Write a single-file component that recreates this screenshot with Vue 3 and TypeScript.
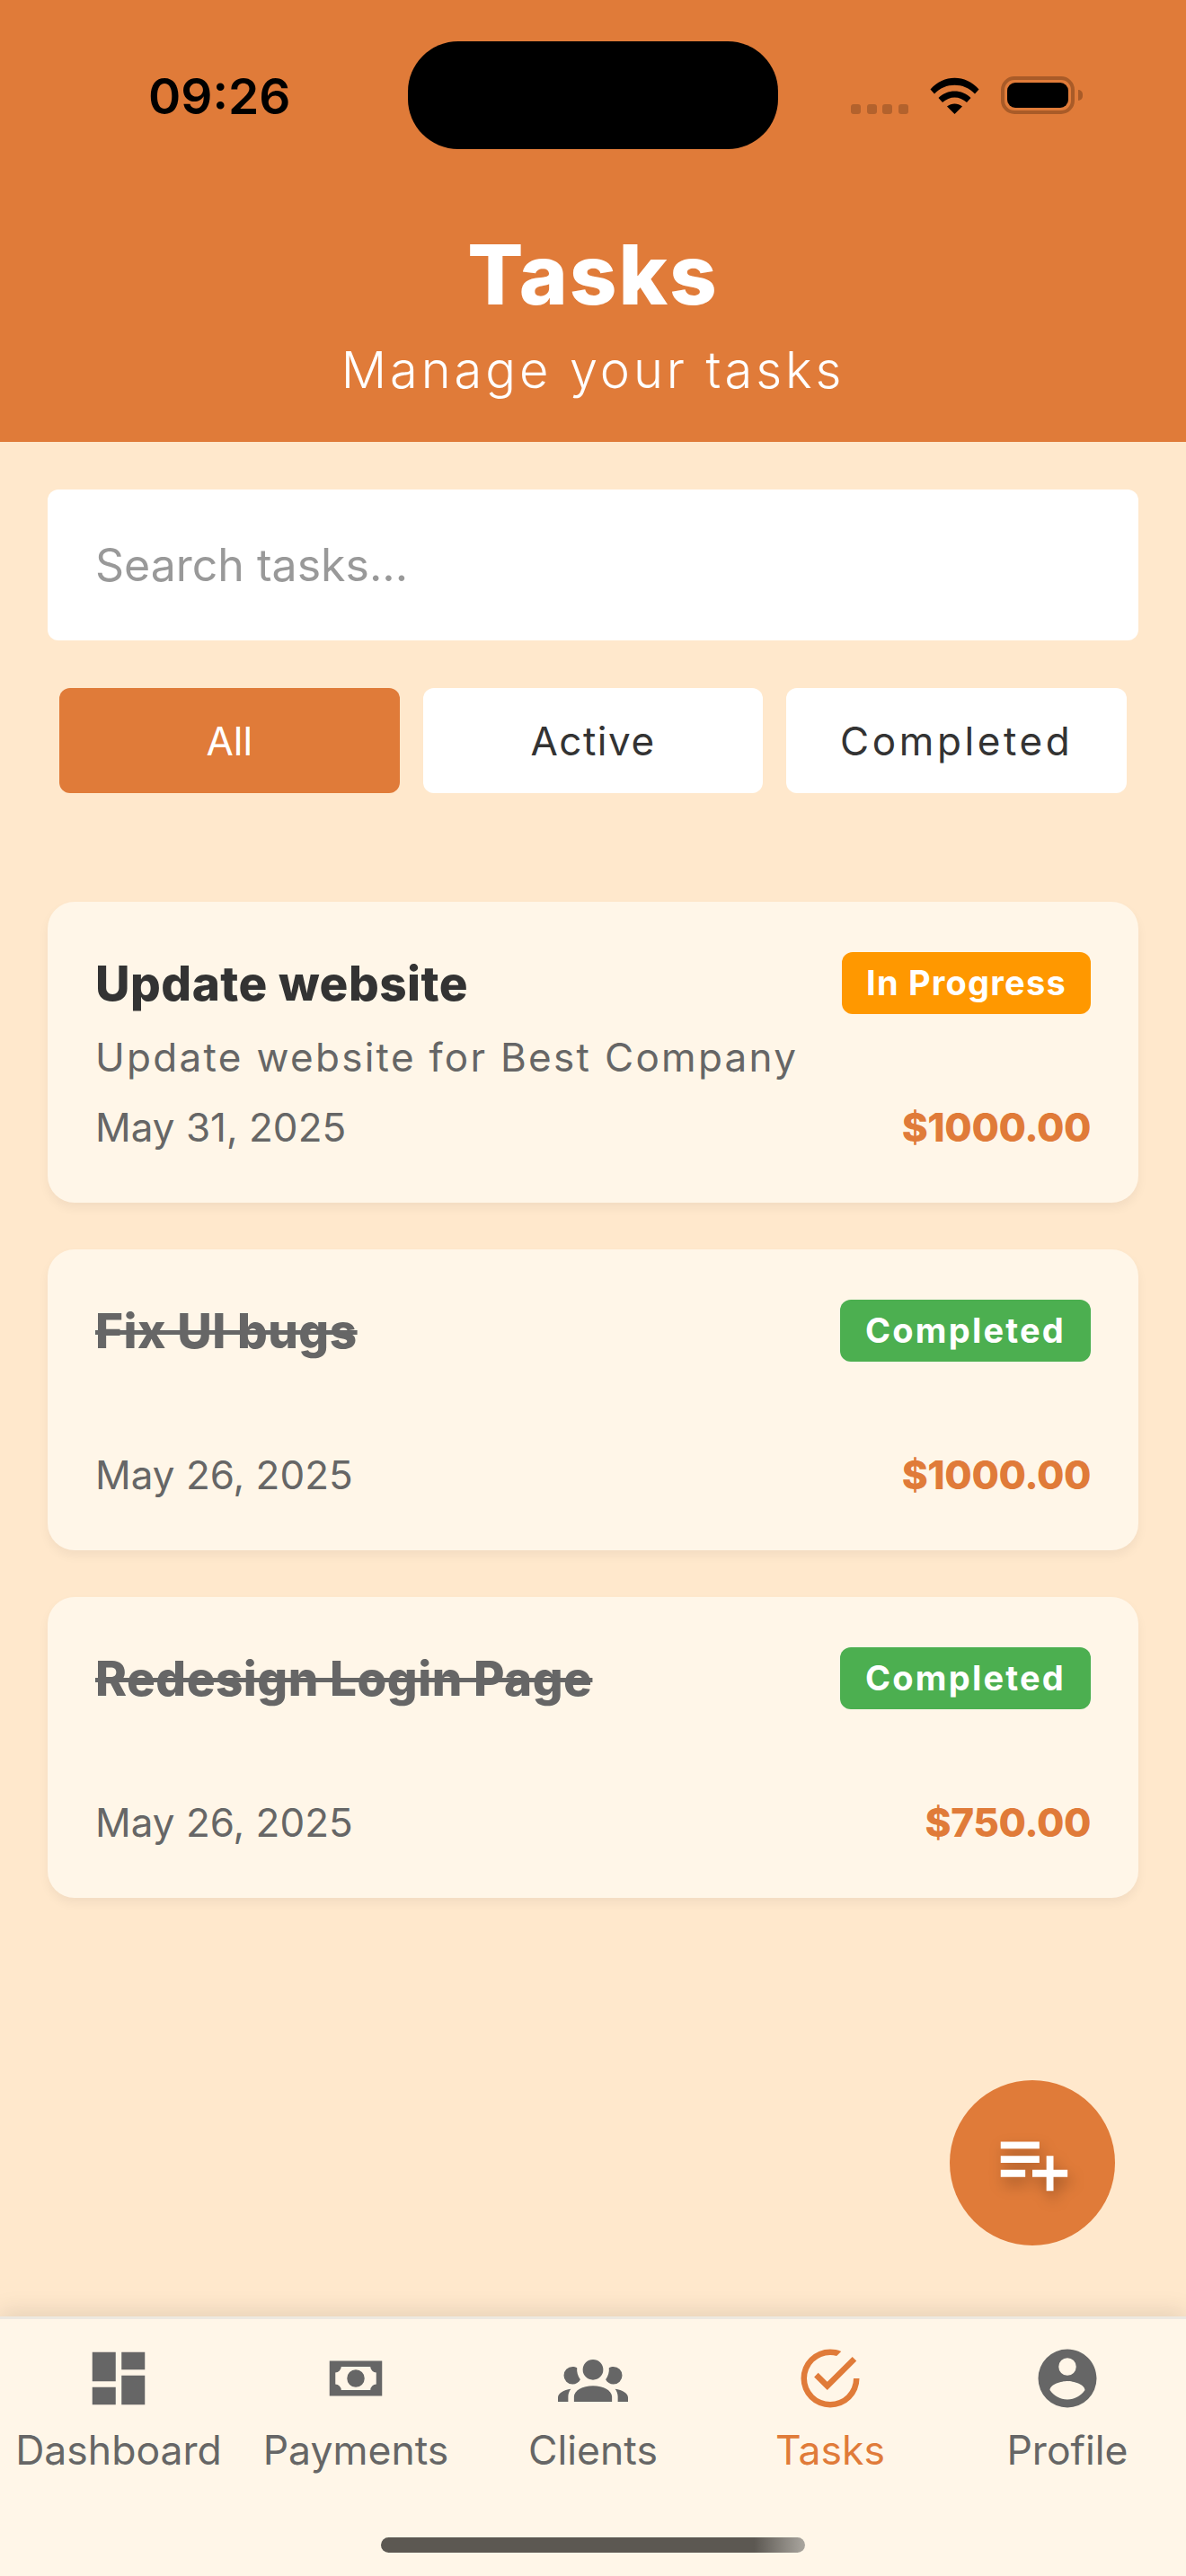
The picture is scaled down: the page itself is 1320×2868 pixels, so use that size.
<script setup lang="ts">
type Status = 'In Progress' | 'Completed'
interface Task { title: string; desc: string; date: string; price: string; status: Status }

const filters = ['All', 'Active', 'Completed']
const tasks: Task[] = [
  { title: 'Update website', desc: 'Update website for Best Company', date: 'May 31, 2025', price: '$1000.00', status: 'In Progress' },
  { title: 'Fix UI bugs', desc: '', date: 'May 26, 2025', price: '$1000.00', status: 'Completed' },
  { title: 'Redesign Login Page', desc: '', date: 'May 26, 2025', price: '$750.00', status: 'Completed' },
]
const tabs = [
  { label: 'Dashboard', active: false, d: 'M13,3V9H21V3M13,21H21V11H13M3,21H11V15H3M3,13H11V3H3V13Z' },
  { label: 'Payments', active: false, d: 'M3,6H21V18H3V6M12,9A3,3 0 0,1 15,12A3,3 0 0,1 12,15A3,3 0 0,1 9,12A3,3 0 0,1 12,9M7,8A2,2 0 0,1 5,10V14A2,2 0 0,1 7,16H17A2,2 0 0,1 19,14V10A2,2 0 0,1 17,8H7Z' },
  { label: 'Clients', active: false, d: 'M12,5.5A3.5,3.5 0 0,1 15.5,9A3.5,3.5 0 0,1 12,12.5A3.5,3.5 0 0,1 8.5,9A3.5,3.5 0 0,1 12,5.5M5,8C5.56,8 6.08,8.15 6.53,8.42C6.38,9.85 6.8,11.27 7.66,12.38C7.16,13.34 6.16,14 5,14A3,3 0 0,1 2,11A3,3 0 0,1 5,8M19,8A3,3 0 0,1 22,11A3,3 0 0,1 19,14C17.84,14 16.84,13.34 16.34,12.38C17.2,11.27 17.62,9.85 17.47,8.42C17.92,8.15 18.44,8 19,8M5.5,18.25C5.5,16.18 8.41,14.5 12,14.5C15.59,14.5 18.5,16.18 18.5,18.25V20H5.5V18.25M0,20V18.5C0,17.11 1.89,15.94 4.45,15.6C3.86,16.28 3.5,17.22 3.5,18.25V20H0M24,20H20.5V18.25C20.5,17.22 20.14,16.28 19.55,15.6C22.11,15.94 24,17.11 24,18.5V20Z' },
  { label: 'Tasks', active: true, d: 'M20,12A8,8 0 0,1 12,20A8,8 0 0,1 4,12A8,8 0 0,1 12,4C12.76,4 13.5,4.11 14.2,4.31L15.77,2.74C14.61,2.26 13.34,2 12,2A10,10 0 0,0 2,12A10,10 0 0,0 12,22A10,10 0 0,0 22,12M7.91,10.08L6.5,11.5L11,16L21,6L19.59,4.58L11,13.17L7.91,10.08Z' },
  { label: 'Profile', active: false, d: 'M12,19.2C9.5,19.2 7.29,17.92 6,16C6.03,14 10,12.9 12,12.9C14,12.9 17.97,14 18,16C16.71,17.92 14.5,19.2 12,19.2M12,5A3,3 0 0,1 15,8A3,3 0 0,1 12,11A3,3 0 0,1 9,8A3,3 0 0,1 12,5M12,2A10,10 0 0,0 2,12A10,10 0 0,0 12,22A10,10 0 0,0 22,12C22,6.47 17.5,2 12,2Z' },
]
</script>

<template>
  <div class="app">
    <header class="header">
      <div class="status">
        <span class="time">09:26</span>
        <div class="island"></div>
        <div class="indicators">
          <div class="signal"><i></i><i></i><i></i><i></i></div>
          <svg class="wifi" width="55" height="41" viewBox="0 0 55 41">
            <path d="M0.5 13.5C15 -3.5 40 -3.5 54.5 13.5L50 18.5C38 5.5 17 5.5 5 18.5Z" fill="#000" />
            <path d="M9.5 23C19 13 36 13 45.5 23L41 28C33 20.5 22 20.5 14 28Z" fill="#000" />
            <path d="M19 32.5C24 28.5 31 28.5 36 32.5L27.5 41Z" fill="#000" />
          </svg>
          <div class="battery"><div class="battery-fill"></div><div class="battery-nub"></div></div>
        </div>
      </div>
      <h1 class="title">Tasks</h1>
      <p class="subtitle">Manage your tasks</p>
    </header>

    <main class="content">
      <input class="search" type="text" placeholder="Search tasks..." />
      <div class="filters">
        <button v-for="(f, i) in filters" :key="f" class="filter" :class="[`f${i}`, { on: i === 0 }]">{{ f }}</button>
      </div>
      <section class="list">
        <article v-for="t in tasks" :key="t.title" class="card">
          <div class="card-head">
            <h2 class="card-title" :class="{ done: t.status === 'Completed' }">{{ t.title }}</h2>
            <span class="badge" :class="t.status === 'Completed' ? 'green' : 'amber'">{{ t.status }}</span>
          </div>
          <p class="card-desc">{{ t.desc }}</p>
          <div class="card-foot">
            <span class="card-date">{{ t.date }}</span>
            <span class="card-price">{{ t.price }}</span>
          </div>
        </article>
      </section>
      <button class="fab" aria-label="Add task">
        <svg width="94" height="94" viewBox="0 0 24 24" fill="#fff">
          <path d="M14 10H3v2h11v-2zm0-4H3v2h11V6zm4 8v-4h-2v4h-4v2h4v4h2v-4h4v-2h-4zM3 16h7v-2H3v2z" />
        </svg>
      </button>
    </main>

    <nav class="nav">
      <div v-for="t in tabs" :key="t.label" class="tab" :class="{ active: t.active }">
        <svg width="78" height="78" viewBox="0 0 24 24" fill="currentColor"><path :d="t.d" /></svg>
        <span class="tab-label">{{ t.label }}</span>
      </div>
      <div class="home"></div>
    </nav>
  </div>
</template>

<style>
html, body { margin: 0; padding: 0; }
</style>

<style scoped>
.app {
  width: 1320px;
  height: 2868px;
  display: flex;
  flex-direction: column;
  background: #ffe8cc;
  font-family: Inter, "Noto Sans", sans-serif;
  overflow: hidden;
  position: relative;
}
.header {
  height: 492px;
  box-sizing: border-box;
  background: #e07b39;
  color: #fff;
  text-align: center;
  flex: none;
}
.status {
  height: 246px;
  position: relative;
}
.time {
  position: absolute;
  left: 165px;
  top: 72px;
  font-size: 55px;
  line-height: 70px;
  font-weight: 600;
  color: #000;
}
.island {
  position: absolute;
  left: 454px;
  top: 46px;
  width: 412px;
  height: 120px;
  border-radius: 56px;
  background: #000;
}
.indicators {
  position: absolute;
  left: 947px;
  top: 85px;
  width: 257px;
  height: 42px;
  display: flex;
  align-items: flex-end;
}
.signal {
  display: flex;
  gap: 6.5px;
  width: 88px;
}
.signal i {
  width: 11px;
  height: 11px;
  border-radius: 3px;
  background: rgba(0, 0, 0, 0.2);
}
.wifi {
  display: block;
  flex: none;
}
.battery {
  margin-left: 24px;
  width: 82px;
  height: 42px;
  box-sizing: border-box;
  border: 4px solid #a95b28;
  border-radius: 15px;
  padding: 3px;
  position: relative;
  flex: none;
}
.battery-fill {
  width: 100%;
  height: 100%;
  background: #000;
  border-radius: 9px;
}
.battery-nub {
  position: absolute;
  right: -13px;
  top: 11px;
  width: 5px;
  height: 12px;
  background: #a95b28;
  border-radius: 0 5px 5px 0;
}
.title {
  margin: 0;
  font-size: 92px;
  line-height: 120px;
  font-weight: 800;
  letter-spacing: 2px;
}
.subtitle {
  margin: 0;
  font-size: 56px;
  line-height: 84px;
  font-weight: 300;
  letter-spacing: 3.9px;
  padding-top: 4px;
}
.content {
  flex: 1;
  padding: 53px 53px 0;
  box-sizing: border-box;
  position: relative;
  display: flex;
  flex-direction: column;
}
.search {
  height: 168px;
  box-sizing: border-box;
  border: 0;
  border-radius: 12px;
  background: #fff;
  padding: 0 53px;
  font-family: inherit;
  font-size: 50px;
  outline: none;
  flex: none;
}
.search::placeholder {
  color: #999;
  opacity: 1;
}
.filters {
  margin-top: 53px;
  padding: 0 13px;
  display: flex;
  gap: 26px;
}
.filter {
  flex: 1 1 0;
  height: 117px;
  border: 0;
  border-radius: 12px;
  background: #fff;
  color: #333;
  font-family: inherit;
  font-size: 44px;
  padding: 0;
}
.filter.f1 { letter-spacing: 1.5px; }
.filter.f2 { letter-spacing: 3.6px; }
.filter.on {
  background: #e07b39;
  color: #fff;
}
.list {
  margin-top: 121px;
  display: flex;
  flex-direction: column;
  gap: 52px;
}
.card {
  height: 335px;
  box-sizing: border-box;
  padding: 56px 53px 0;
  border-radius: 30px;
  background: #fff6e8;
  box-shadow: 0 6px 12px rgba(0, 0, 0, 0.05);
}
.card-head {
  display: flex;
  justify-content: space-between;
  align-items: center;
  height: 69px;
}
.card-title {
  margin: 0;
  font-size: 53px;
  font-weight: 800;
  letter-spacing: 0.5px;
  color: #333;
}
.card-title.done {
  text-decoration: line-through;
  color: #666;
}
.badge {
  height: 69px;
  line-height: 69px;
  text-align: center;
  border-radius: 12px;
  color: #fff;
  font-size: 38px;
  font-weight: 700;
}
.amber { width: 277px; background: #ff9800; letter-spacing: 1.2px; }
.green { width: 279px; background: #4caf50; letter-spacing: 2.2px; }
.card-desc {
  margin: 16px 0 17px;
  height: 64px;
  line-height: 64px;
  font-size: 44px;
  letter-spacing: 2.3px;
  color: #666;
}
.card-foot {
  display: flex;
  justify-content: space-between;
  align-items: center;
  height: 57px;
  font-size: 44px;
  color: #666;
}
.card-price {
  font-weight: 800;
  letter-spacing: -0.4px;
  color: #e07b39;
}
.fab {
  position: absolute;
  right: 79px;
  bottom: 79px;
  width: 184px;
  height: 184px;
  border: 0;
  border-radius: 50%;
  background: #e07b39;
  padding: 0;
  display: flex;
  align-items: center;
  justify-content: center;
}
.fab svg {
  display: block;
  filter: drop-shadow(3px 8px 8px rgba(0, 0, 0, 0.28));
}
.nav {
  height: 289px;
  flex: none;
  box-sizing: border-box;
  border-top: 3px solid #ece8e0;
  background: #fff6e8;
  box-shadow: 0 -6px 24px rgba(0, 0, 0, 0.1);
  padding-top: 27px;
  display: flex;
  position: relative;
}
.tab {
  flex: 1;
  display: flex;
  flex-direction: column;
  align-items: center;
  color: #666;
}
.tab svg {
  display: block;
}
.tab.active {
  color: #e07b39;
}
.tab-label {
  margin-top: 11px;
  font-size: 44.5px;
  line-height: 60px;
}
.home {
  position: absolute;
  left: 424px;
  top: 243px;
  width: 472px;
  height: 17px;
  border-radius: 9px;
  background: linear-gradient(90deg, #5c5852 0%, #5c5852 88%, #aaa69f 100%);
}
</style>
